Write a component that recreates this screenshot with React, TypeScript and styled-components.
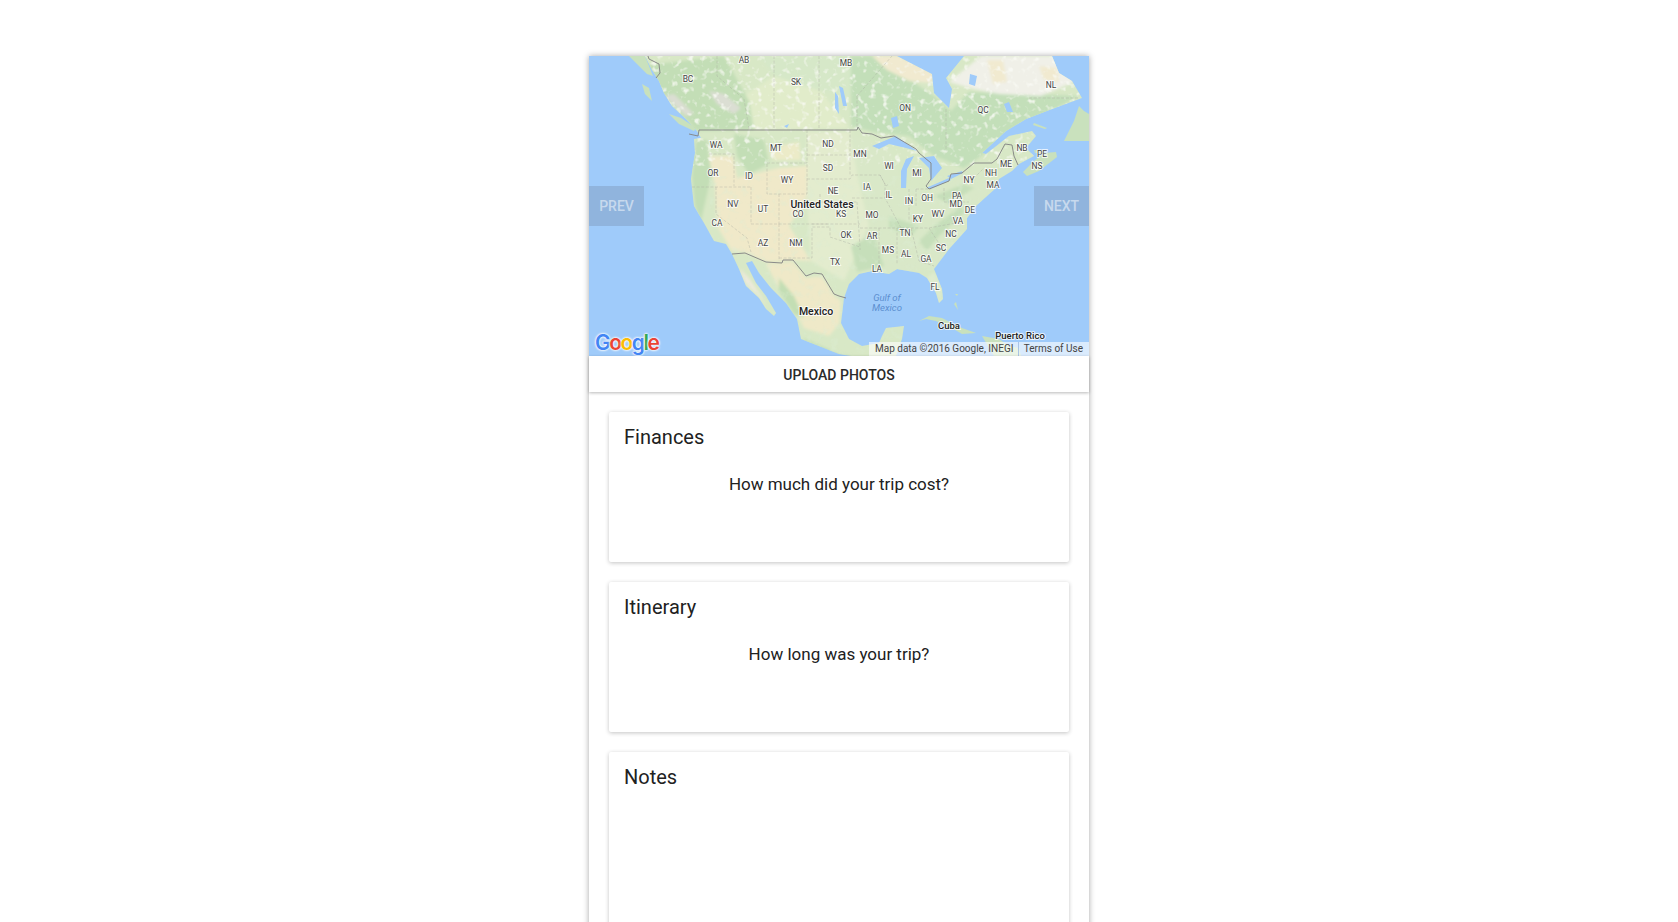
import React from 'react';
import styled, { createGlobalStyle } from 'styled-components';

const GlobalStyle = createGlobalStyle`
  html, body {
    margin: 0;
    height: 100%;
    background: #fff;
    overflow: hidden;
  }
  #root {
    height: 100%;
    overflow: hidden;
  }
`;

const Page = styled.div`
  font-family: Roboto, "Liberation Sans", sans-serif;
  color: #212121;
  height: 100%;
  padding-top: 56px;
  box-sizing: border-box;
`;

const Shell = styled.main`
  width: 500px;
  height: 1000px;
  margin: 0 auto;
  background: #fff;
  box-shadow: 0 0 6px rgba(0, 0, 0, 0.35);
`;

const MapFrame = styled.div`
  position: relative;
  height: 300px;
  overflow: hidden;
  background: #9fcbfa;
`;

const MapDrawing = styled.svg`
  display: block;
  width: 500px;
  height: 300px;
`;

const NavButton = styled.button<{ $side: 'left' | 'right' }>`
  position: absolute;
  top: 130px;
  ${(p) => p.$side}: 0;
  width: 55px;
  height: 40px;
  padding: 0;
  border: 0;
  background: rgba(90, 100, 120, 0.22);
  color: rgba(255, 255, 255, 0.5);
  font: 500 14px Roboto, sans-serif;
`;

const GoogleMark = styled.div`
  position: absolute;
  left: 6px;
  bottom: 1px;
  font: 600 21px/24px Inter, Roboto, sans-serif;
  letter-spacing: -1.5px;
  text-shadow: 0 0 2px #fff, 0 0 2px #fff, 0 0 3px #fff;
`;

const Letter = styled.span<{ $color: string }>`
  color: ${(p) => p.$color};
`;

const Attribution = styled.div`
  position: absolute;
  right: 0;
  bottom: 0;
  width: 220px;
  height: 14px;
  box-sizing: border-box;
  padding: 0 6px;
  display: flex;
  justify-content: space-between;
  align-items: center;
  background: rgba(255, 255, 255, 0.62);
  font: 10px/14px Roboto, sans-serif;
  color: #444;
`;

const TermsLink = styled.span`
  border-left: 1px solid #a9c4e6;
  padding-left: 5px;
`;

const UploadBar = styled.div`
  position: relative;
  height: 36px;
  padding-top: 1px;
  box-sizing: border-box;
  display: flex;
  align-items: center;
  justify-content: center;
  background: #fff;
  font-size: 14px;
  font-weight: 500;
  color: #2a2a2a;
  box-shadow: 0 1px 3px rgba(0, 0, 0, 0.28);
`;

const CardList = styled.div`
  display: flex;
  flex-direction: column;
  gap: 20px;
  padding: 20px;
`;

const Card = styled.section<{ $height: number }>`
  height: ${(p) => p.$height}px;
  box-sizing: border-box;
  padding: 11px 15px;
  border-radius: 2px;
  background: #fff;
  box-shadow: 0 1px 4px rgba(0, 0, 0, 0.24);
`;

const CardTitle = styled.h2`
  margin: 0;
  font-size: 20px;
  line-height: 28px;
  font-weight: 400;
`;

const Question = styled.p`
  margin: 21px 0 0;
  font-size: 17px;
  line-height: 24px;
  text-align: center;
`;

const StateLabel = styled.text<{ $kind?: 'country' | 'water' | 'island' }>`
  font-family: Roboto, sans-serif;
  font-size: ${(p) => (p.$kind === 'country' ? 10.5 : p.$kind ? 9.5 : 8.4)}px;
  font-weight: ${(p) => (p.$kind === 'country' || p.$kind === 'island' ? 500 : 400)};
  font-style: ${(p) => (p.$kind === 'water' ? 'italic' : 'normal')};
  fill: ${(p) => (p.$kind === 'water' ? '#5c8fd0' : p.$kind ? '#222' : '#444')};
  text-anchor: middle;
  dominant-baseline: central;
  paint-order: stroke;
  stroke: ${(p) => (p.$kind === 'water' ? 'none' : 'rgba(255,255,255,0.75)')};
  stroke-width: 2px;
`;

const land =
  'M56 0 L62 12 L70 25 L75 37 L83 50 L97 63 L108 75 L112 82 L105 83 L106 97 L102 123 L105 150 L115 167 L125 185 L137 188 L143 198 L150 213 L157 230 L170 242 L177 253 L185 260 L187 257 L177 240 L167 227 L157 207 L163 205 L170 217 L182 232 L197 247 L208 263 L212 283 L230 290 L250 298 L262 300 L307 300 L313 283 L315 270 L297 272 L293 280 L290 287 L273 290 L260 283 L252 267 L255 242 L260 228 L270 218 L283 215 L300 218 L308 213 L330 217 L338 222 L347 237 L350 247 L354 243 L353 233 L345 213 L360 193 L378 173 L378 162 L387 150 L407 132 L410 123 L423 115 L430 108 L445 100 L437 92 L447 80 L443 75 L420 80 L397 98 L393 97 L417 75 L437 63 L463 53 L493 42 L483 25 L470 17 L463 0 Z';

const patches = [
  // boreal forest, Ontario and Quebec
  { c: '#c3dfb9', d: 'M262 0 L290 0 L306 14 L345 40 L362 55 L380 36 L440 38 L490 40 L462 55 L417 78 L395 98 L375 112 L345 100 L320 80 L285 76 L262 70 Z' },
  // tan strip south of Hudson Bay
  { c: '#f1ead0', d: 'M283 0 L310 0 L345 18 L343 27 L320 25 L298 14 Z' },
  // northern Quebec, tundra
  { c: '#f0f0e8', d: 'M360 26 L392 0 L465 0 L485 26 L452 40 L410 38 L385 33 Z' },
  { c: '#f1ead0', d: 'M398 4 L414 4 L418 26 L404 28 Z M450 10 L468 12 L470 26 L455 24 Z' },
  // prairies
  { c: '#e1ecca', d: 'M155 40 L185 20 L232 35 L260 72 L160 74 Z' },
  { c: '#d6e8c8', d: 'M170 0 L262 0 L262 40 L232 35 L185 20 Z' },
  // BC and rockies
  { c: '#c3deb6', d: 'M50 10 L135 0 L160 45 L165 74 L108 75 L83 50 Z' },
  { c: '#dbded3', d: 'M120 35 L135 38 L152 52 L145 58 L128 48 Z M75 40 L85 38 L105 58 L97 60 Z' },
  // west US
  { c: '#c3deb6', d: 'M107 84 L118 84 L122 120 L112 165 L106 150 L103 120 Z M145 78 L175 84 L180 108 L160 118 L148 100 Z' },
  { c: '#f0e9c9', d: 'M120 100 L144 100 L148 122 L190 112 L218 110 L218 140 L200 170 L222 205 L204 204 L178 206 L155 196 L143 195 L128 170 L126 130 Z' },
  { c: '#ecebc8', d: 'M180 92 L210 86 L212 104 L185 104 Z' },
  // plains
  { c: '#e3ecce', d: 'M218 76 L262 76 L268 118 L280 170 L270 190 L255 225 L222 205 L218 140 Z' },
  // midwest and east
  { c: '#d9e8c8', d: 'M260 78 L300 90 L315 130 L340 135 L395 112 L405 130 L385 150 L375 176 L345 212 L300 216 L270 216 L270 190 L280 170 Z' },
  { c: '#c6dfba', d: 'M262 190 L285 178 L295 210 L268 216 Z M330 185 L345 170 L372 150 L376 156 L350 180 L338 195 Z M300 160 L330 170 L322 180 L300 172 Z M345 140 L375 128 L385 132 L360 148 Z' },
  // Mexico
  { c: '#efe9c8', d: 'M177 208 L204 206 L217 222 L233 220 L245 240 L252 245 L250 268 L240 280 L215 272 L208 258 L190 232 Z' },
  { c: '#c3deb4', d: 'M190 222 L205 240 L215 262 L205 258 L190 235 Z M214 282 L250 298 L262 300 L228 300 Z' },
  { c: '#edeadb', d: 'M150 212 L157 228 L170 240 L178 252 L172 240 L160 222 Z' },
  // Florida, gulf edge
  { c: '#dfeccf', d: 'M338 222 L347 236 L351 246 L352 232 L345 216 Z' },
];

const lakes = [
  'M283 90 L307 80 L328 95 L317 92 L300 88 L290 93 Z',
  'M317 103 L325 100 L318 113 L317 132 L312 132 L312 115 Z',
  'M330 102 L345 100 L353 112 L342 125 L340 112 Z',
  'M337 132 L360 122 L362 124 L342 133 Z',
  'M358 120 L373 115 L374 117 L362 123 Z',
  'M308 0 L343 18 L345 37 L360 52 L363 33 L357 22 L375 0 Z',
  'M250 30 L254 32 L258 50 L254 50 Z',
  'M246 36 L249 40 L250 58 L246 52 Z',
  'M302 62 L308 60 L310 70 L304 72 Z',
  'M415 48 L420 46 L424 56 L418 56 Z',
  'M381 18 L388 20 L386 30 L380 28 Z',
  'M195 70 L200 68 L198 72 Z',
];

const islands = [
  'M434 116 L445 105 L455 97 L467 96 L468 101 L450 115 L438 120 Z',
  'M445 94 L456 95 L456 98 L446 97 Z',
  'M475 85 L485 65 L490 50 L495 55 L500 58 L500 85 L485 85 Z',
  'M445 67 L458 72 L456 73 L444 69 Z',
  'M80 58 L92 62 L107 72 L105 75 L90 68 Z',
  'M53 28 L60 32 L63 45 L56 38 Z',
  'M40 0 L56 0 L64 20 L58 18 L48 8 Z',
  'M330 265 L340 260 L353 262 L373 272 L387 277 L373 278 L363 272 L347 265 L337 263 Z',
  'M393 280 L410 283 L420 290 L430 292 L432 300 L405 300 Z',
  'M365 248 L367 246 L369 254 Z',
  'M366 238 L369 238 L368 240 Z',
];

const borders = [
  'M59 0 L60 3 L70 8 L71 17 L67 22',
  'M110 74 L268 74 L269 71 L273 77 L283 78 L292 82 L305 80 L327 93 L330 97 L342 107 L342 123 L337 130 L340 133 L360 125 L362 118 L373 117 L385 107 L403 107 L408 103 L416 88 L423 89 L425 100 L429 109',
  'M110 74 L109 80 L100 78',
  'M143 198 L156 197 L177 206 L193 207 L194 204 L204 204 L217 220 L225 217 L233 218 L245 238 L250 240 L257 242',
];

const stateLines = [
  'M185 0 V73', 'M230 0 V73', 'M128 0 V20 L155 43 L160 73',
  'M268 40 V72 M268 40 L303 0', 'M357 53 V93', 'M440 42 H490',
  'M120 98 H145 V130', 'M103 131 H162', 'M127 131 V158 L158 182 L162 196', 'M162 131 V168',
  'M178 107 H218 V138 H178 Z', 'M190 138 V168', 'M162 168 H240', 'M190 168 V205', 'M190 202 H223 V171 H241 V181 L271 191',
  'M218 74 V107', 'M218 99 H261', 'M218 123 H261 L263 119 H291 L297 130 L300 128', 'M261 74 V119',
  'M231 138 V146 H268', 'M223 168 H271', 'M263 142 H296', 'M268 146 L271 191 V194', 'M271 172 H340', 'M291 119 L296 128 V142 L312 172',
  'M320 133 V165', 'M327 133 V150', 'M327 133 H342', 'M355 132 V146 H380', 'M340 172 L372 166', 'M308 172 V208', 'M290 172 V214', 'M322 172 L330 205', 'M330 205 L345 210', 'M340 172 L355 195', 'M385 122 L395 112',
];

const labels: [string, number, number, ('country' | 'water' | 'island')?][] = [
  ['BC', 99, 23], ['AB', 155, 4], ['SK', 207, 26], ['MB', 257, 7], ['ON', 316, 52], ['QC', 394, 54], ['NL', 462, 29],
  ['NB', 433, 92], ['PE', 453, 98], ['NS', 448, 110], ['ME', 417, 108], ['NH', 402, 117], ['MA', 404, 129], ['NY', 380, 124],
  ['WA', 127, 89], ['MT', 187, 92], ['ND', 239, 88], ['SD', 239, 112], ['WY', 198, 124], ['OR', 124, 117], ['ID', 160, 120],
  ['NV', 144, 148], ['NE', 244, 135], ['MN', 271, 98], ['WI', 300, 110], ['MI', 328, 117], ['IA', 278, 131], ['IL', 300, 139],
  ['IN', 320, 145], ['OH', 338, 142], ['PA', 368, 140], ['MD', 367, 148], ['CA', 128, 167], ['UT', 174, 153], ['CO', 209, 158],
  ['AZ', 174, 187], ['NM', 207, 187], ['TX', 246, 206], ['KS', 252, 158], ['MO', 283, 159], ['KY', 329, 163], ['WV', 349, 158],
  ['VA', 369, 165], ['DE', 381, 154], ['NC', 362, 178], ['TN', 316, 177], ['OK', 257, 179], ['AR', 283, 180], ['MS', 299, 194],
  ['AL', 317, 198], ['SC', 352, 192], ['GA', 337, 203], ['LA', 288, 213], ['FL', 346, 231],
  ['United States', 233, 148, 'country'], ['Mexico', 227, 255, 'country'], ['Gulf of', 298, 241, 'water'], ['Mexico', 298, 251, 'water'],
  ['Cuba', 360, 269, 'island'], ['Puerto Rico', 431, 279, 'island'],
];

const googleLetters: [string, string][] = [
  ['G', '#4285f4'], ['o', '#ea4335'], ['o', '#fbbc05'], ['g', '#4285f4'], ['l', '#34a853'], ['e', '#ea4335'],
];

const TerrainMap = () => (
  <MapDrawing viewBox="0 0 500 300" aria-hidden="true">
    <defs>
      <filter id="soft" x="-5%" y="-5%" width="110%" height="110%">
        <feGaussianBlur stdDeviation="1.4" />
      </filter>
      <filter id="edge">
        <feGaussianBlur stdDeviation="0.45" />
      </filter>
      {/* mottled terrain: turbulence thresholded to flecks of one colour */}
      <filter id="flecks" x="0" y="0" width="100%" height="100%">
        <feTurbulence type="fractalNoise" baseFrequency="0.16" numOctaves="2" seed="7" />
        <feColorMatrix values="0 0 0 0 0.95  0 0 0 0 0.96  0 0 0 0 0.91  4 0 0 0 -2.2" />
        <feGaussianBlur stdDeviation="0.4" />
      </filter>
      <filter id="forest" x="0" y="0" width="100%" height="100%">
        <feTurbulence type="fractalNoise" baseFrequency="0.12" numOctaves="3" seed="12" />
        <feColorMatrix values="0 0 0 0 0.72  0 0 0 0 0.85  0 0 0 0 0.66  0 4 0 0 -2.1" />
        <feGaussianBlur stdDeviation="0.4" />
      </filter>
      <clipPath id="landClip">
        <path d={land} />
      </clipPath>
    </defs>
    <g filter="url(#edge)">
      <path d={land} fill="#d8e8c6" />
      {islands.map((d) => (
        <path key={d} d={d} fill="#c9e1bd" />
      ))}
    </g>
    <g clipPath="url(#landClip)">
      <g filter="url(#soft)">
        {patches.map((p) => (
          <path key={p.d} d={p.d} fill={p.c} />
        ))}
      </g>
      <rect x="120" y="120" width="290" height="180" filter="url(#forest)" opacity="0.35" />
      <rect x="55" y="0" width="445" height="110" filter="url(#flecks)" opacity="0.8" />
    </g>
    <g filter="url(#edge)" fill="#9fcbfa">
      {lakes.map((d) => (
        <path key={d} d={d} />
      ))}
    </g>
    <g fill="none" stroke="#a9aba1" strokeOpacity="0.55" strokeWidth="0.7" strokeDasharray="3 1.6">
      {stateLines.map((d) => (
        <path key={d} d={d} />
      ))}
    </g>
    <g fill="none" stroke="#858585" strokeWidth="0.95">
      {borders.map((d) => (
        <path key={d} d={d} />
      ))}
    </g>
    {labels.map(([text, x, y, kind]) => (
      <StateLabel key={`${text}-${x}`} x={x} y={y} $kind={kind}>
        {text}
      </StateLabel>
    ))}
  </MapDrawing>
);

const App: React.FC = () => (
  <>
    <GlobalStyle />
    <Page>
      <Shell>
        <MapFrame>
          <TerrainMap />
          <NavButton $side="left">PREV</NavButton>
          <NavButton $side="right">NEXT</NavButton>
          <GoogleMark>
            {googleLetters.map(([ch, color], i) => (
              <Letter key={i} $color={color}>
                {ch}
              </Letter>
            ))}
          </GoogleMark>
          <Attribution>
            <span>Map data ©2016 Google, INEGI</span>
            <TermsLink>Terms of Use</TermsLink>
          </Attribution>
        </MapFrame>
        <UploadBar>UPLOAD PHOTOS</UploadBar>
        <CardList>
          <Card $height={150}>
            <CardTitle>Finances</CardTitle>
            <Question>How much did your trip cost?</Question>
          </Card>
          <Card $height={150}>
            <CardTitle>Itinerary</CardTitle>
            <Question>How long was your trip?</Question>
          </Card>
          <Card $height={320}>
            <CardTitle>Notes</CardTitle>
          </Card>
        </CardList>
      </Shell>
    </Page>
  </>
);

export default App;
